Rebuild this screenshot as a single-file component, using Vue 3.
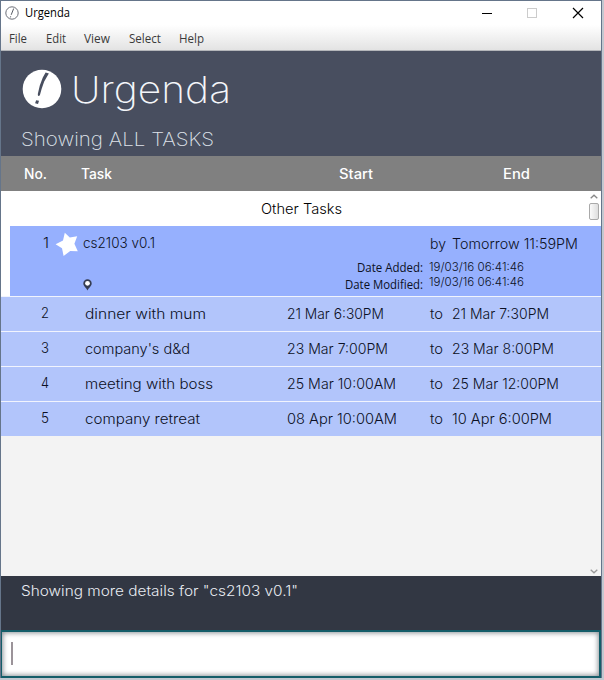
<script setup>
import { h } from 'vue'

// One line of text fitted to a given width; y is the baseline inside the line box.
const Fit = (p) =>
  h('svg', { class: 'fit', width: p.w, height: p.h ?? 35 }, [
    h('text', { x: 0, y: p.y ?? 23, textLength: p.w, lengthAdjust: 'spacingAndGlyphs' }, p.t),
  ])
Fit.props = ['t', 'w', 'h', 'y']

const menus = [
  { t: 'File', w: 18 },
  { t: 'Edit', w: 20 },
  { t: 'View', w: 26 },
  { t: 'Select', w: 32 },
  { t: 'Help', w: 25 },
]

const tasks = [
  { no: '2', name: 'dinner with mum', nw: 121, start: '21 Mar 6:30PM', sw: 97, end: '21 Mar 7:30PM', ew: 97 },
  { no: '3', name: "company's d&d", nw: 105, start: '23 Mar 7:00PM', sw: 101, end: '23 Mar 8:00PM', ew: 102 },
  { no: '4', name: 'meeting with boss', nw: 128, start: '25 Mar 10:00AM', sw: 109, end: '25 Mar 12:00PM', ew: 107 },
  { no: '5', name: 'company retreat', nw: 115, start: '08 Apr 10:00AM', sw: 110, end: '10 Apr 6:00PM', ew: 100 },
]
</script>

<template>
  <div class="desktop">
    <div class="window">
      <div class="chrome">
        <div class="titlebar">
          <svg class="app-icon" width="14" height="14" viewBox="0 0 14 14">
            <circle cx="7" cy="7" r="6.2" fill="#fff" stroke="#6c6f78" stroke-width="1" />
            <path d="M8.7 2.5 6.2 8.8M5.7 10.3 5.2 11.5" stroke="#555963" stroke-width="1" fill="none" />
          </svg>
          <Fit class="title" t="Urgenda" :w="45" :h="24" :y="16" />
          <svg class="controls" width="104" height="12" viewBox="0 0 104 12" shape-rendering="crispEdges">
            <path d="M0 6.5h10" stroke="#000" />
            <rect x="45.5" y="1.5" width="9" height="9" fill="none" stroke="#ccc" />
            <path d="m91 1 10 10M101 1 91 11" stroke="#000" stroke-width="1.2" shape-rendering="auto" />
          </svg>
        </div>
        <nav class="menubar">
          <Fit v-for="m in menus" :key="m.t" :t="m.t" :w="m.w" :h="25" :y="18" />
        </nav>
      </div>

      <header class="header">
        <div class="brand">
          <svg class="logo" width="40" height="40" viewBox="0 0 40 40">
            <circle cx="20" cy="20" r="19.3" fill="#fff" />
            <path d="M23.6 3.6 26.9 4.4 25.2 7.2 22.2 12.5 19.6 20 17.8 26.4 16 27 15.8 25 17.8 16.5 20.8 8.5Z" fill="#484e5f" />
            <path d="m14.1 31.2 2.9.6-1 3.2-2.9-.8Z" fill="#484e5f" />
          </svg>
          <Fit class="name" t="Urgenda" :w="160" :h="50" :y="37" />
        </div>
        <Fit class="showing" t="Showing ALL TASKS" :w="193" :h="28" :y="20" />
      </header>

      <div class="thead">
        <Fit t="No." :w="23" />
        <Fit t="Task" :w="31" />
        <Fit t="Start" :w="34" />
        <Fit t="End" :w="27" />
      </div>

      <main class="list">
        <div class="group"><Fit t="Other Tasks" :w="81" /></div>

        <section class="selected">
          <div class="left">
            <div class="line">
              <Fit class="one" t="1" :w="6" :y="22" />
              <svg class="star" width="24" height="25" viewBox="0 0 24 25">
                <path d="M9.8.8 14.8 5.4 22.2 4.3 19.4 11.8 22.8 19.2 15.2 18.9 8.6 24 7 16.2.6 12.2 8 8.6Z" fill="#fff" />
              </svg>
              <Fit t="cs2103 v0.1" :w="72" :y="22" />
            </div>
            <svg class="pin" width="9" height="12" viewBox="0 0 9 12">
              <path d="M4.5.2A4.2 4.2 0 0 0 .3 4.4C.3 7 3.2 8.4 4.5 11.6 5.8 8.4 8.7 7 8.7 4.4A4.2 4.2 0 0 0 4.5.2Z" fill="#353c52" />
              <circle cx="4.5" cy="4.3" r="2.4" fill="#fff" />
            </svg>
          </div>
          <div class="right">
            <div class="due">
              <Fit t="by" :w="16" :h="33" />
              <Fit t="Tomorrow 11:59PM" :w="126" :h="33" />
            </div>
            <div class="dates">
              <div class="labels">
                <Fit t="Date Added:" :w="66" :h="17" :y="13" />
                <Fit t="Date Modified:" :w="78" :h="17" :y="13" />
              </div>
              <div class="values">
                <Fit t="19/03/16 06:41:46" :w="95" :h="15" :y="12" />
                <Fit t="19/03/16 06:41:46" :w="95" :h="15" :y="12" />
              </div>
            </div>
          </div>
        </section>

        <div v-for="k in tasks" :key="k.no" class="row">
          <Fit :t="k.no" :w="8" :h="34" :y="21" />
          <Fit :t="k.name" :w="k.nw" :h="34" :y="22" />
          <Fit :t="k.start" :w="k.sw" :h="34" :y="22" />
          <Fit t="to" :w="13" :h="34" :y="22" />
          <Fit :t="k.end" :w="k.ew" :h="34" :y="22" />
        </div>

        <div class="scrollbar">
          <svg width="8" height="5" viewBox="0 0 8 5"><path d="M.7 4.3 4 1.2l3.3 3.1" fill="none" stroke="#888" stroke-width="1.3" /></svg>
          <div class="thumb"></div>
          <svg class="down" width="8" height="5" viewBox="0 0 8 5"><path d="M.7.7 4 3.8 7.3.7" fill="none" stroke="#999" stroke-width="1.3" /></svg>
        </div>
      </main>

      <footer class="feedback">
        <Fit t="Showing more details for &quot;cs2103 v0.1&quot;" :w="277" :h="30" :y="20" />
      </footer>
      <div class="command"><div class="caret"></div></div>
    </div>
  </div>
</template>

<style>
body {
  margin: 0;
}
.fit {
  display: block;
  flex: none;
  overflow: visible;
}
.fit text {
  fill: currentColor;
}
</style>

<style scoped>
.desktop {
  box-sizing: border-box;
  width: 604px;
  height: 680px;
  overflow: hidden;
  background: #c3c8d0;
  font-family: Inter, 'Open Sans', sans-serif;
  font-size: 14px;
  font-weight: 350;
  color: #0c1024;
}
.window {
  box-sizing: border-box;
  width: 602px;
  height: 678px;
  border: 1px solid #65758a;
  border-bottom: 0;
  display: flex;
  flex-direction: column;
}
.chrome {
  height: 50px;
  box-sizing: border-box;
  border-bottom: 1px solid #b4b6ba;
  background: linear-gradient(#fff 0, #fff 24px, #e3e3e3 49px);
  font-family: 'Open Sans', sans-serif;
  font-size: 12px;
  font-weight: 400;
}
.titlebar {
  height: 24px;
  display: flex;
  align-items: center;
  padding-left: 4px;
}
.title {
  margin-left: 6px;
  color: #000;
}
.controls {
  margin-left: auto;
  margin-right: 15px;
}
.menubar {
  display: flex;
  gap: 18.5px;
  padding-left: 8px;
  color: #3a3a3a;
}
.header {
  height: 105px;
  background: #484e5f;
  color: #f4f6fa;
}
.brand {
  display: flex;
  padding: 15px 0 0 21px;
}
.logo {
  margin-top: 3px;
}
.name {
  margin-left: 9px;
  font-size: 37px;
  font-weight: 200;
}
.showing {
  margin: 10px 0 0 20px;
  font-size: 19px;
  font-weight: 250;
  color: #dfe3ea;
}
.thead {
  height: 35px;
  display: grid;
  grid-template-columns: 57px 258px 164px 1fr;
  padding-left: 23px;
  background: #808080;
  color: #fff;
  font-weight: 500;
}
.list {
  position: relative;
  height: 385px;
  background: #f3f3f3;
}
.group {
  height: 35px;
  display: flex;
  justify-content: center;
  background: #fff;
  color: #000;
}
.selected {
  box-sizing: border-box;
  height: 70px;
  border-left: 9px solid #fff;
  background: #96b0fe;
  display: flex;
  justify-content: space-between;
}
.line {
  display: flex;
  padding-left: 33px;
}
.star {
  margin: 6px 4px 0 6px;
}
.pin {
  display: block;
  margin: 18px 0 0 73px;
}
.right {
  margin-right: 23px;
}
.due {
  display: flex;
  gap: 6px;
  justify-content: flex-end;
}
.dates {
  display: flex;
  gap: 6px;
}
.labels {
  display: flex;
  flex-direction: column;
  align-items: flex-end;
  font-family: 'Open Sans', sans-serif;
  font-size: 12px;
  font-weight: 400;
}
.values {
  padding-right: 54px;
  font-size: 12px;
}
.row {
  height: 34px;
  border-top: 1px solid #f1f4fd;
  display: grid;
  grid-template-columns: 44px 202px 143px 22px 1fr;
  padding-left: 40px;
  background: #b2c5fb;
}
.scrollbar {
  position: absolute;
  top: 0;
  right: 0;
  bottom: 0;
  width: 14px;
  display: flex;
  flex-direction: column;
  align-items: center;
  padding: 3px 0 2px;
  box-sizing: border-box;
}
.thumb {
  box-sizing: border-box;
  width: 10px;
  height: 17px;
  margin-top: 4px;
  border: 1px solid #a9a9a9;
  border-radius: 2px;
  background: linear-gradient(90deg, #fafafa, #dedede);
}
.down {
  margin-top: auto;
}
.feedback {
  height: 54px;
  padding-left: 20px;
  background: #323743;
  color: #e9ecf2;
}
.command {
  box-sizing: border-box;
  height: 48px;
  border: 2px solid #145d69;
  border-left-width: 1px;
  background: #fff;
  box-shadow: inset 0 0 5px 1px #8c9297;
  padding: 10px 0 0 9px;
}
.caret {
  width: 2px;
  height: 23px;
  background: #9b9399;
}
</style>
